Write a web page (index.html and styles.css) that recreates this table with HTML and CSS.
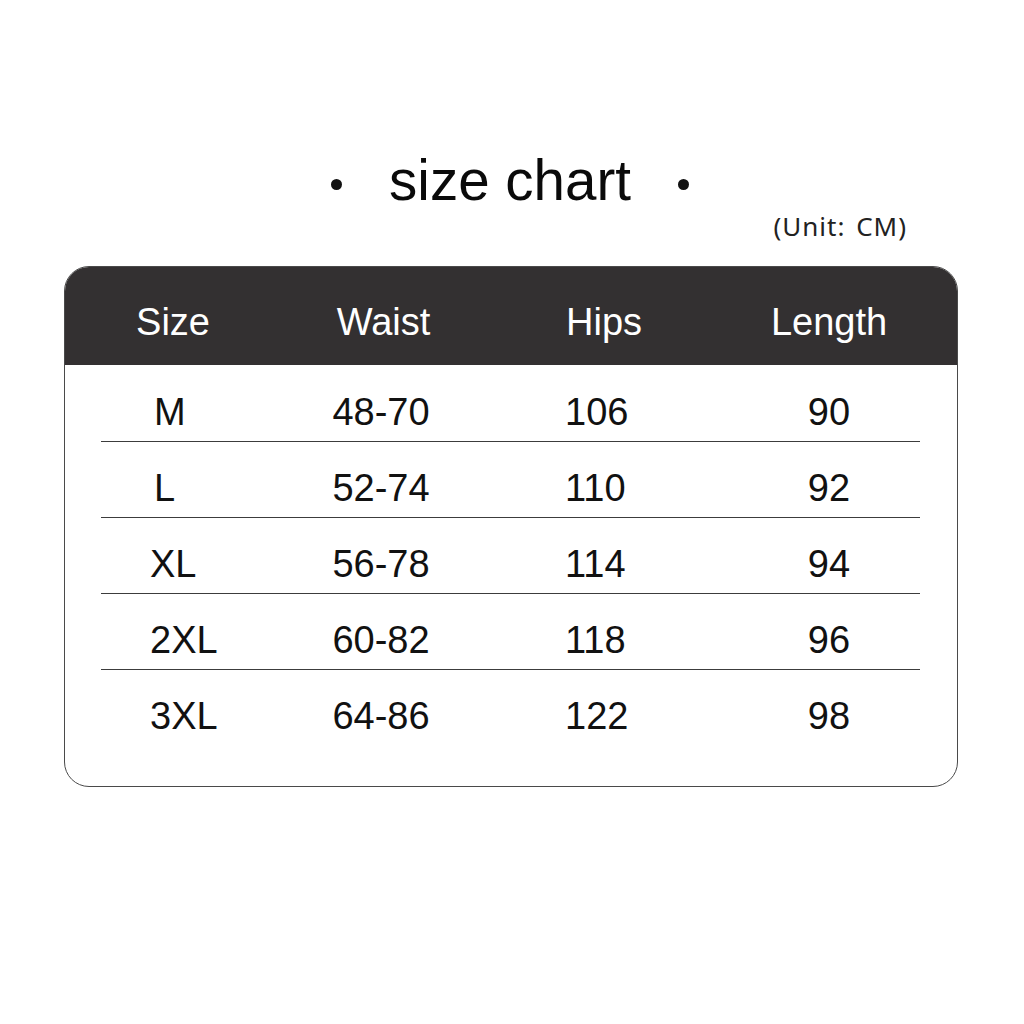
FILE: index.html
```html
<!DOCTYPE html>
<html lang="en">
<head>
<meta charset="utf-8">
<title>size chart</title>
<link rel="stylesheet" href="styles.css">
</head>
<body>
<main class="page">
  <h1 class="title"><span class="dot"></span><span class="title-text">size chart</span><span class="dot"></span></h1>
  <p class="unit">(Unit: CM)</p>
  <section class="card">
    <div class="head">
      <div class="hrow">
        <div class="hc c1">Size</div>
        <div class="hc c2">Waist</div>
        <div class="hc c3">Hips</div>
        <div class="hc c4">Length</div>
      </div>
    </div>
    <div class="rows">
      <div class="row"><div class="c r1 indent">M</div><div class="c r2">48-70</div><div class="c r3">106</div><div class="c r4">90</div></div>
      <div class="row"><div class="c r1 indent">L</div><div class="c r2">52-74</div><div class="c r3">110</div><div class="c r4">92</div></div>
      <div class="row"><div class="c r1">XL</div><div class="c r2">56-78</div><div class="c r3">114</div><div class="c r4">94</div></div>
      <div class="row"><div class="c r1">2XL</div><div class="c r2">60-82</div><div class="c r3">118</div><div class="c r4">96</div></div>
      <div class="row last"><div class="c r1">3XL</div><div class="c r2">64-86</div><div class="c r3">122</div><div class="c r4">98</div></div>
    </div>
  </section>
</main>
</body>
</html>
```

FILE: styles.css
```css
html, body {
  margin: 0;
  padding: 0;
  background: #ffffff;
}

body {
  font-family: "Liberation Sans", Arial, sans-serif;
  color: #111111;
}

.page {
  width: 1024px;
  height: 1024px;
  padding-top: 153px;
  box-sizing: border-box;
}

.title {
  margin: 0;
  display: flex;
  align-items: center;
  justify-content: center;
  gap: 47px;
  height: 56px;
  font-size: 56.5px;
  line-height: 56px;
  font-weight: normal;
  color: #0a0a0a;
  padding-right: 4px;
}

.title-text {
  display: block;
}

.dot {
  width: 11px;
  height: 11px;
  border-radius: 50%;
  background: #111111;
  margin-top: 7px;
}

.unit {
  margin: 3px 0 0 0;
  text-align: right;
  padding-right: 117px;
  font-family: "Noto Sans", "Open Sans", sans-serif;
  font-size: 26px;
  line-height: 28px;
  letter-spacing: 1px;
  word-spacing: 3px;
  color: #222222;
}

.card {
  margin: 26px 66px 0 64px;
  border: 1.5px solid #4a4a4a;
  border-radius: 25px;
  overflow: hidden;
  background: #ffffff;
}

.head {
  background: #333031;
  color: #ffffff;
  padding: 13px 37px 0 36px;
  height: 85px;
}

.hrow {
  display: grid;
  grid-template-columns: 144px 277px 217px 180px;
  font-size: 38px;
  line-height: 85px;
}

.hc {
  text-align: center;
  white-space: nowrap;
}

.hc.c3 {
  text-align: left;
  padding-left: 44px;
}

.rows {
  margin: 0 37px 0 36px;
  padding-top: 1px;
  padding-bottom: 41px;
}

.row {
  display: grid;
  grid-template-columns: 169px 222px 247px 180px;
  font-size: 38px;
  line-height: 57px;
  padding-top: 18px;
  border-bottom: 1px solid #3c3c3c;
  color: #111111;
}

.row.last {
  border-bottom: none;
}

.c {
  white-space: nowrap;
}

.r1 {
  text-align: left;
  padding-left: 49px;
}

.r1.indent {
  padding-left: 53px;
}

.r2 {
  text-align: center;
}

.r3 {
  text-align: left;
  padding-left: 73px;
}

.r4 {
  text-align: center;
}
```
